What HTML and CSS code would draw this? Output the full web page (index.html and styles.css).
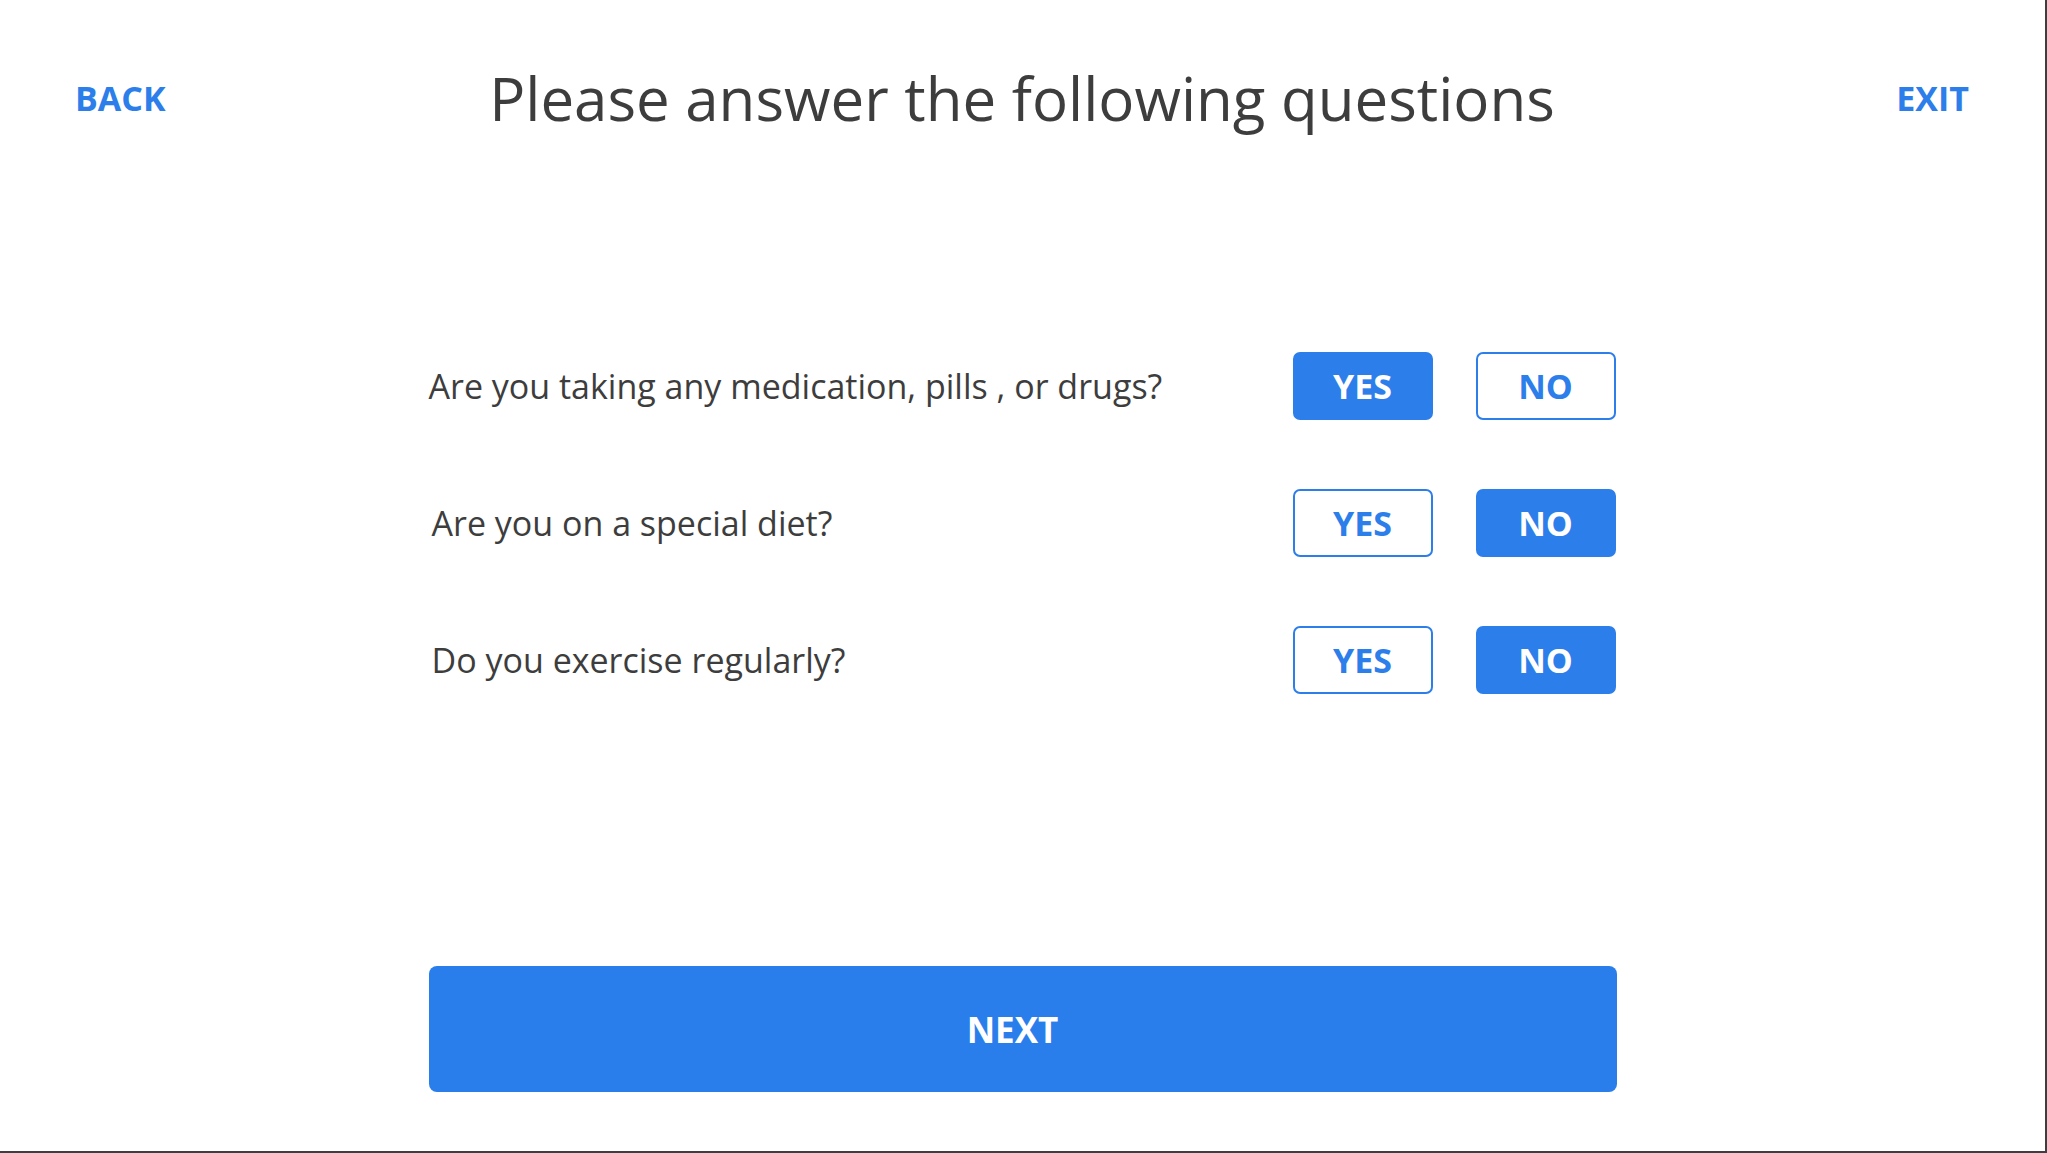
FILE: index.html
```html
<!DOCTYPE html>
<html lang="en">
<head>
<meta charset="utf-8">
<title>Questions</title>
<link rel="stylesheet" href="styles.css">
</head>
<body>
<div class="page">
  <header class="header">
    <a class="nav nav-back">BACK</a>
    <h1 class="title">Please answer the following questions</h1>
    <a class="nav nav-exit">EXIT</a>
  </header>
  <main class="questions">
    <div class="row">
      <div class="q q-first">Are you taking any medication, pills , or drugs?</div>
      <div class="choices">
        <button class="btn btn-on">YES</button>
        <button class="btn">NO</button>
      </div>
    </div>
    <div class="row">
      <div class="q">Are you on a special diet?</div>
      <div class="choices">
        <button class="btn">YES</button>
        <button class="btn btn-on">NO</button>
      </div>
    </div>
    <div class="row">
      <div class="q">Do you exercise regularly?</div>
      <div class="choices">
        <button class="btn">YES</button>
        <button class="btn btn-on">NO</button>
      </div>
    </div>
  </main>
  <button class="next">NEXT</button>
</div>
</body>
</html>
```

FILE: styles.css
```css
html, body {
  margin: 0;
  padding: 0;
  background: #ffffff;
}

.page {
  width: 2047px;
  height: 1153px;
  box-sizing: border-box;
  border-right: 2px solid #3b3e43;
  border-bottom: 2px solid #3b3e43;
  display: flex;
  flex-direction: column;
  font-family: "Open Sans", "Noto Sans", sans-serif;
  color: #3d3d3d;
}

.header {
  height: 196px;
  display: grid;
  grid-template-columns: 1fr auto 1fr;
  align-items: center;
  padding: 0 76px 0 75px;
}

.nav {
  color: #2c7eea;
  font-weight: 700;
  font-size: 34px;
  line-height: 1;
  text-decoration: none;
}

.nav-exit {
  justify-self: end;
}

.title {
  margin: 0;
  font-weight: 400;
  font-size: 60px;
  line-height: 1;
  color: #3d3d3d;
}

.questions {
  align-self: center;
  width: 1188px;
  margin-top: 156px;
  display: flex;
  flex-direction: column;
  gap: 69px;
}

.row {
  display: flex;
  align-items: center;
  height: 68px;
}

.q {
  flex: 1;
  font-size: 34px;
  padding-left: 3px;
  color: #3d3d3d;
}

.q-first {
  padding-left: 0;
}

.choices {
  display: flex;
  gap: 43px;
  padding-right: 1px;
}

.btn {
  width: 140px;
  height: 68px;
  box-sizing: border-box;
  border: 2px solid #2c7eea;
  border-radius: 7px;
  background: #ffffff;
  color: #2c7eea;
  font-family: "Open Sans", "Noto Sans", sans-serif;
  font-weight: 700;
  font-size: 34px;
  padding: 0;
}

.btn-on {
  background: #2c7eea;
  color: #ffffff;
}

.next {
  align-self: center;
  width: 1188px;
  height: 126px;
  margin-top: 272px;
  border: none;
  border-radius: 8px;
  background: #2a7eec;
  color: #ffffff;
  font-family: "Open Sans", "Noto Sans", sans-serif;
  font-weight: 700;
  font-size: 35px;
  padding: 0 20px 0 0;
}
```
